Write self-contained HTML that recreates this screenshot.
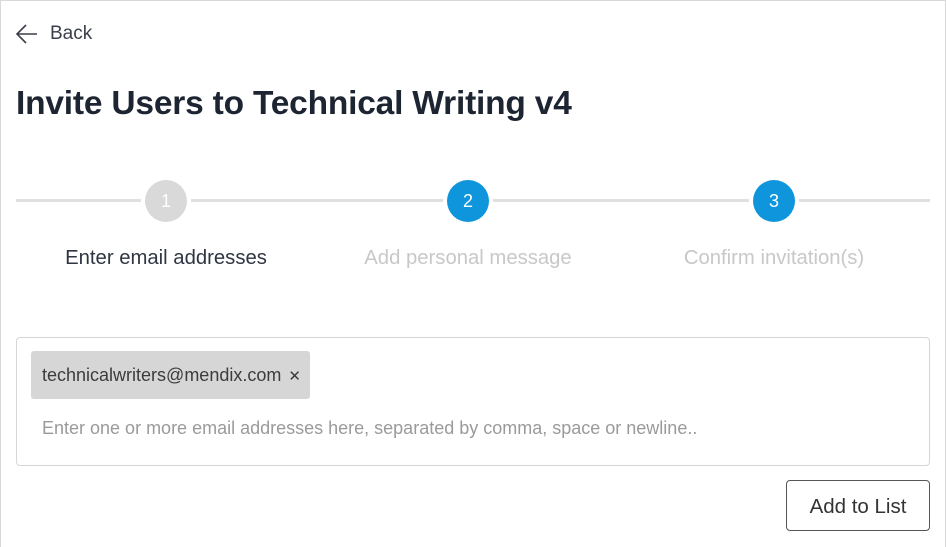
<!DOCTYPE html>
<html><head><style>
body{margin:0;width:946px;height:547px;background:#fff;font-family:"Liberation Sans",sans-serif;overflow:hidden}
.frame{position:absolute;left:0;top:0;width:944px;height:546px;border:1px solid #d8d8d8;border-bottom:none}
.back{position:absolute;left:15px;top:23px;font-size:19px;color:#3a3f4a;display:flex;align-items:center}
h1{position:absolute;left:16px;top:85px;margin:0;font-size:33.5px;font-weight:bold;color:#1e2532;letter-spacing:-0.2px}
.line{position:absolute;left:16px;top:199px;width:914px;height:3px;background:#e0e0e0}
.c{position:absolute;top:180px;width:42px;height:42px;border-radius:50%;color:#fff;font-size:18px;text-align:center;line-height:42px;box-shadow:0 0 0 4px #fff}
.l{position:absolute;top:247px;font-size:20.3px;width:300px;text-align:center}
.box{position:absolute;left:16px;top:337px;width:912px;height:127px;border:1px solid #d6d6d6;border-radius:4px}
.tag{position:absolute;left:31px;top:351px;width:279px;height:48px;background:#d6d6d6;border-radius:3px;font-size:18px;color:#3c3c3c;line-height:48px;padding-left:11px;box-sizing:border-box;white-space:nowrap}
.ph{position:absolute;left:42px;top:418px;font-size:18px;color:#9a9a9a;white-space:nowrap}
.btn{position:absolute;left:786px;top:480px;width:144px;height:51px;border:1px solid #555;border-radius:4px;box-sizing:border-box;font-size:20.5px;color:#333;text-align:center;line-height:51px}
</style></head><body>
<div class="frame"></div>
<div class="back"><svg width="24" height="22" viewBox="0 0 24 22"><path d="M22 11H2M11 2L2 11l9 9" fill="none" stroke="#3a3f4a" stroke-width="1.6"/></svg><span style="margin-left:11px">Back</span></div>
<h1>Invite Users to Technical Writing v4</h1>
<div class="line"></div>
<div class="c" style="left:145px;background:#d9d9d9">1</div>
<div class="c" style="left:447px;background:#0f95dc">2</div>
<div class="c" style="left:753px;background:#0f95dc">3</div>
<div class="l" style="left:16px;color:#2f3542">Enter email addresses</div>
<div class="l" style="left:318px;color:#c8c8c8">Add personal message</div>
<div class="l" style="left:624px;color:#c8c8c8">Confirm invitation(s)</div>
<div class="box"></div>
<div class="tag">technicalwriters@mendix.com <span style="margin-left:2px;font-size:15px">✕</span></div>
<div class="ph">Enter one or more email addresses here, separated by comma, space or newline..</div>
<div class="btn">Add to List</div>
</body></html>
